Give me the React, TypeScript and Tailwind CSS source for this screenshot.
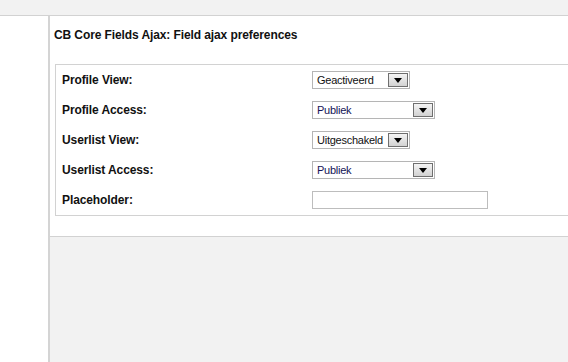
import React from "react";

type Row = { label: string; value?: string; width?: number; blue?: boolean };

const rows: Row[] = [
  { label: "Profile View:", value: "Geactiveerd", width: 98 },
  { label: "Profile Access:", value: "Publiek", width: 123, blue: true },
  { label: "Userlist View:", value: "Uitgeschakeld", width: 98 },
  { label: "Userlist Access:", value: "Publiek", width: 123, blue: true },
  { label: "Placeholder:" },
];

function FakeSelect({ value, width, blue }: { value: string; width: number; blue?: boolean }) {
  return (
    <div
      className="flex h-[18px] items-stretch border border-[#b5b5b5] bg-white p-px"
      style={{ width }}
    >
      <span
        className={`flex flex-1 items-center overflow-hidden whitespace-nowrap pl-[3px] text-[11px] leading-none tracking-[-0.25px] ${
          blue ? "text-[#141456]" : "text-[#111]"
        }`}
      >
        {value}
      </span>
      <span className="ml-px flex w-[20px] items-center justify-center border border-[#6f6f6f] bg-gradient-to-b from-[#f4f4f4] to-[#d2d2d2]">
        <svg width="8" height="5" viewBox="0 0 8 5">
          <path d="M0 0 H8 L4 5 Z" fill="#000" />
        </svg>
      </span>
    </div>
  );
}

export default function App() {
  return (
    <div
      className="flex h-[362px] w-[568px] flex-col overflow-hidden bg-[#f2f2f2]"
      style={{ fontFamily: '"Liberation Sans", Arial, sans-serif' }}
    >
      {/* top strip */}
      <div className="h-[16px] shrink-0 border-b border-[#d2d2d2] bg-[#f2f2f2]" />

      <div className="flex flex-1">
        {/* left column */}
        <div className="w-[50px] shrink-0 border-r-2 border-[#d4d4d4] bg-white" />

        {/* main */}
        <div className="flex min-w-0 flex-1 flex-col">
          <div className="h-[221px] border-b border-[#d2d2d2] bg-white">
            <h1 className="pl-[4px] pt-[12px] text-[12px] font-bold leading-[14px] tracking-[-0.1px] text-[#111]">
              CB Core Fields Ajax: Field ajax preferences
            </h1>

            <div className="ml-[5px] mt-[22px] w-[540px] border border-[#d2d2d2]">
              {rows.map((r) => (
                <div key={r.label} className="grid h-[30px] grid-cols-[256px_1fr] items-center">
                  <span className="pl-[6px] text-[12px] font-bold tracking-[-0.1px] text-[#111]">{r.label}</span>
                  {r.value ? (
                    <FakeSelect value={r.value} width={r.width!} blue={r.blue} />
                  ) : (
                    <input
                      type="text"
                      className="h-[18px] w-[176px] border border-[#bdbdbd] bg-white outline-none"
                    />
                  )}
                </div>
              ))}
            </div>
          </div>
        </div>
      </div>
    </div>
  );
}
